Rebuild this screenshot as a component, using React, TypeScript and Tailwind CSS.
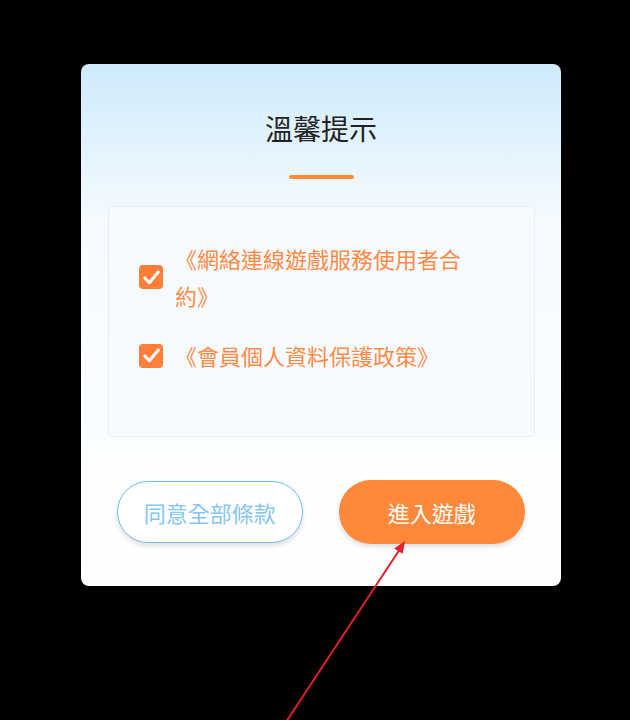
const cjk = { fontFamily: '"Noto Sans CJK TC", "Noto Sans", sans-serif' }

function Check() {
  return (
    <span className="flex h-[24px] w-[24px] shrink-0 items-center justify-center rounded-[4px] bg-[#ff7f3a]">
      <svg width="19" height="19" viewBox="0 0 16 16" fill="none">
        <path d="M2.4 8.4 L6.2 12.4 L13.8 3.4" stroke="#fff" strokeWidth="2.6" strokeLinecap="round" strokeLinejoin="round" />
      </svg>
    </span>
  )
}

const terms = ['《網絡連線遊戲服務使用者合約》', '《會員個人資料保護政策》']

export default function App() {
  return (
    <div className="relative h-[720px] w-[630px] overflow-hidden bg-black pl-[81px] pt-[64px]" style={cjk}>
      <div className="flex w-[480px] flex-col items-center overflow-hidden rounded-[8px] bg-gradient-to-b from-[#cfeafb] via-[#f5fbff] via-[30%] to-white pb-[42px]">
        <h1 className="mt-[46px] text-[28px] leading-[36px] font-normal text-[#222]">溫馨提示</h1>
        <div className="mt-[29px] h-[4px] w-[65px] rounded-full bg-[#ff8a3d]" />

        <div className="mt-[27px] h-[231px] w-[427px] self-start ml-[27px] rounded-[4px] border border-[#e6eef6] bg-[#f7fbff] pl-[30px] pt-[33px]">
          <div className="flex flex-col gap-[23px]">
            {terms.map((t) => (
              <div key={t} className="flex items-center gap-[12px]">
                <Check />
                <span className="w-[300px] text-[22px] leading-[37px] text-[#ff8a45]">{t}</span>
              </div>
            ))}
          </div>
        </div>

        <div className="mt-[44px] flex w-full gap-[36px] px-[36px]">
          <button className="h-[62px] w-[186px] rounded-full border-[1.5px] border-[#72bcef] bg-white text-[22px] text-[#86c6f4] shadow-[0_3px_5px_rgba(0,0,0,0.12)]">
            同意全部條款
          </button>
          <button className="h-[64px] w-[187px] -mt-[1px] rounded-full bg-[#ff883b] text-[22px] text-white shadow-[0_3px_5px_rgba(0,0,0,0.12)]">
            進入遊戲
          </button>
        </div>
      </div>

      <svg className="pointer-events-none absolute left-0 top-0" width="630" height="720" viewBox="0 0 630 720">
        <line x1="286" y1="722" x2="400" y2="549" stroke="#e01f2b" strokeWidth="2" />
        <polygon points="405,541 402.6,553.8 394.2,548.4" fill="#e01f2b" />
      </svg>
    </div>
  )
}
